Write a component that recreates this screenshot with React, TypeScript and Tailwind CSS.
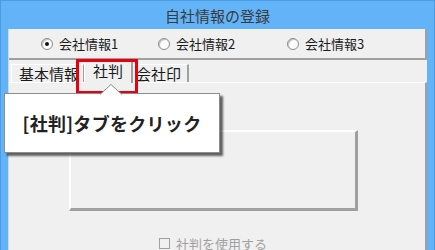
import React from 'react';

const jp = { fontFamily: '"Noto Sans CJK JP", "Noto Sans", sans-serif' };

const Radio = ({ checked, label }: { checked?: boolean; label: string }) => (
  <div className="flex items-center gap-[6px]">
    <span className="w-[12px] h-[12px] rounded-full border border-[#8a8a8a] bg-white flex items-center justify-center shadow-[inset_1px_1px_1px_rgba(0,0,0,0.25)]">
      {checked && <span className="w-[4px] h-[4px] rounded-full bg-[#111]" />}
    </span>
    <span className="text-[13px] text-[#1a1a1a] leading-none">{label}</span>
  </div>
);

const App = () => {
  return (
    <div style={jp} className="relative w-[435px] h-[250px] overflow-hidden bg-[#63b3f8] border-t border-x border-[#4d9be0] flex flex-col">
      <div className="h-[30px] pt-[3px] flex items-center justify-center text-[15px] text-[#3a3a3a]">
        自社情報の登録
      </div>

      <div className="flex-1 mx-[7px] bg-[#f0f0f0] border-l border-[#cfd7df] flex flex-col">
        {/* radio group */}
        <div className="h-[31px] border-b-2 border-r-2 border-[#a0a0a0] flex items-center pl-[32px]">
          <div className="w-[117px]"><Radio checked label="会社情報1" /></div>
          <div className="w-[129px]"><Radio label="会社情報2" /></div>
          <Radio label="会社情報3" />
        </div>

        {/* tabs */}
        <div className="h-[22px] flex items-end pl-[2px]">
          <div className="h-[18px] w-[73px] pl-[7px] border-t border-l border-white border-r border-r-[#a0a0a0] flex items-center text-[15px] text-[#1a1a1a] leading-none">
            基本情報
          </div>
          <div className="h-[24px] w-[49px] -mb-[1px] bg-[#f0f0f0] border-t border-l border-white border-r-2 border-r-[#a0a0a0] flex items-start justify-center pt-[3px] text-[15px] text-[#1a1a1a] leading-none z-10">
            社判
          </div>
          <div className="h-[18px] w-[56px] pl-[3px] border-t border-white border-r-2 border-r-[#a0a0a0] flex items-center text-[15px] text-[#1a1a1a] leading-none">
            会社印
          </div>
        </div>

        {/* tab panel */}
        <div className="flex-1 border-t border-white border-r-2 border-r-[#a0a0a0] flex flex-col items-center">
          <div className="mt-[47px] ml-[-8px] w-[289px] h-[81px] border-t-2 border-l-2 border-white border-b-[3px] border-r-[3px] border-b-[#a0a0a0] border-r-[#a0a0a0]" />
          <div className="mt-[26px] ml-[-8px] flex items-center gap-[6px]">
            <span className="w-[11px] h-[11px] border border-[#a0a0a0] bg-[#f0f0f0]" />
            <span className="text-[13px] text-[#a0a0a0] leading-none">社判を使用する</span>
          </div>
        </div>
      </div>

      {/* highlight around tab */}
      <div className="absolute left-[75px] top-[58px] w-[62px] h-[35px] border-[3px] border-[#e8000e] z-20" />

      {/* callout */}
      <div className="absolute left-[3px] top-[92px] w-[216px] h-[60px] bg-white border border-[#8c8c8c] shadow-[3px_3px_2px_rgba(0,0,0,0.6)] flex items-center justify-center z-30">
        <span className="text-[18px] font-bold text-[#222] tracking-[0.3px]">[社判]タブをクリック</span>
      </div>
      <svg className="absolute left-[99px] top-[83px] z-40" width="22" height="11" viewBox="0 0 22 11">
        <polygon points="0,10.5 11,0.5 22,10.5" fill="white" />
        <polyline points="0,10.5 11,0.5 22,10.5" fill="none" stroke="#8c8c8c" strokeWidth="1" />
        <rect x="1" y="10" width="20" height="1" fill="white" />
      </svg>
    </div>
  );
};

export default App;
